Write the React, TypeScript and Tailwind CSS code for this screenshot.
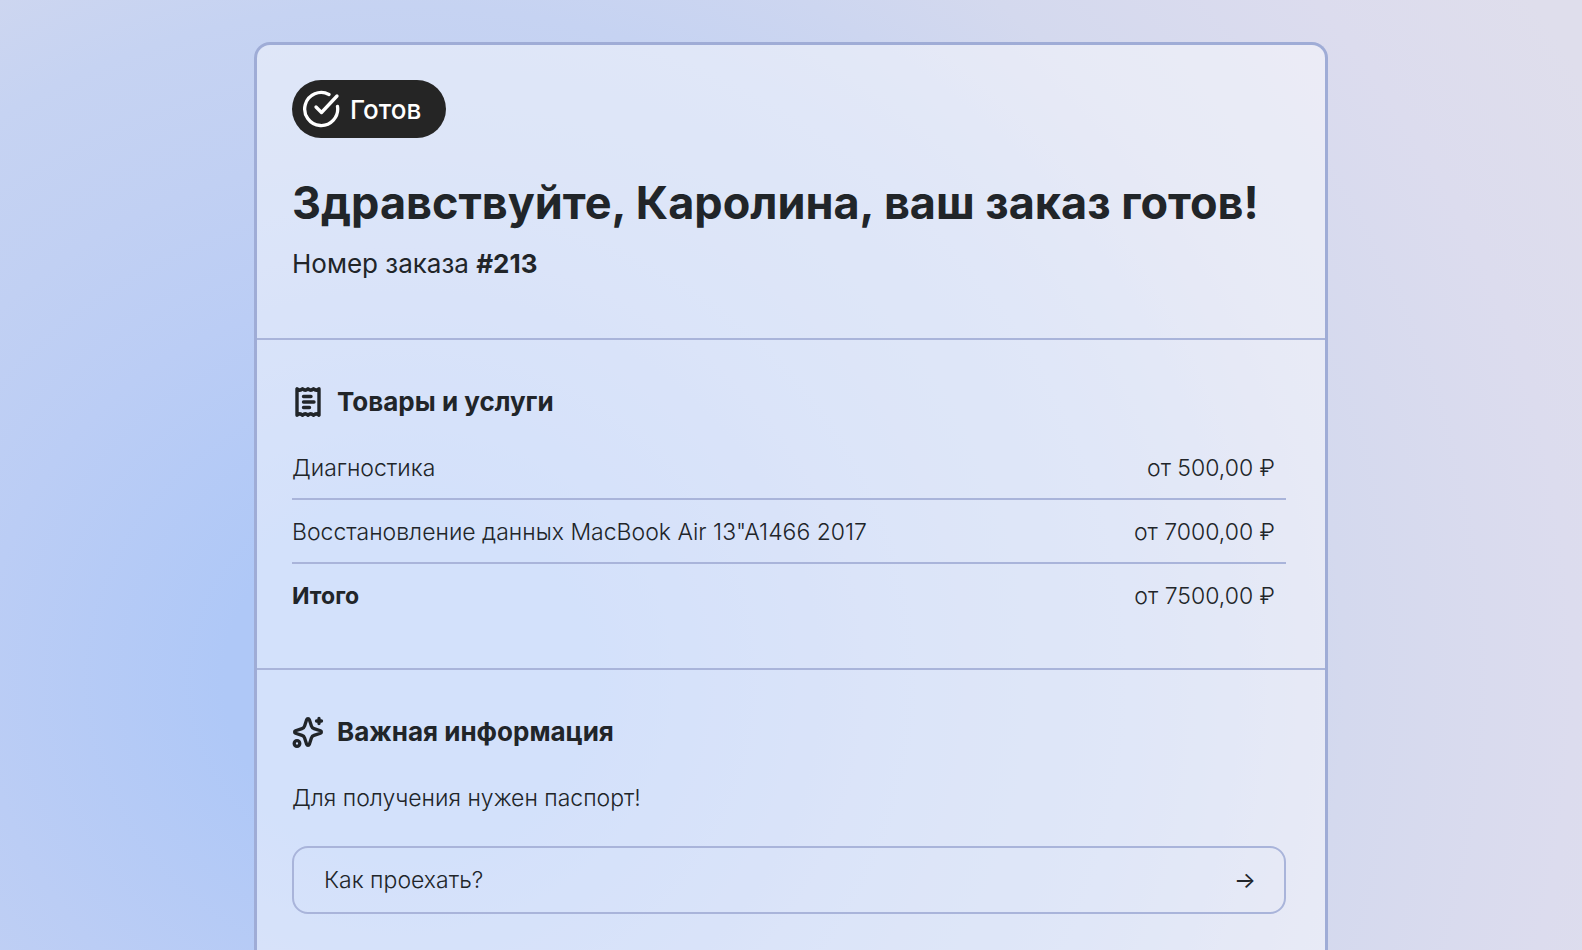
import React from 'react';

const items = [
  { name: 'Диагностика', price: 'от 500,00 ₽' },
  { name: 'Восстановление данных MacBook Air 13"A1466 2017', price: 'от 7000,00 ₽' },
];

function CheckIcon() {
  return (
    <svg className="size-10 shrink-0" viewBox="0 0 40 40" fill="none" stroke="currentColor" strokeWidth="3.3" strokeLinecap="round" strokeLinejoin="round">
      <path d="M28 5.500A16.500 16.500 0 1 0 36.500 17.500" />
      <path d="M15 18 20.500 23.500 36 7" />
    </svg>
  );
}

function ReceiptIcon() {
  return (
    <svg className="size-8 shrink-0" viewBox="0 0 32 32" fill="none" stroke="currentColor" strokeWidth="3.4" strokeLinecap="round" strokeLinejoin="round">
      <path d="M5 2.800v26.400q2.800-2.600 5.500 0 2.700-2.600 5.500 0 2.700-2.600 5.500 0 2.700-2.600 5.500 0V2.800q-2.700 2.600-5.500 0-2.700 2.600-5.500 0-2.700 2.600-5.500 0-2.700 2.600-5.500 0z" />
      <path d="M11.500 10.500h7.500M11.500 16h10.500M11.500 21.500h6" />
    </svg>
  );
}

function SparkleIcon() {
  return (
    <svg className="size-8 shrink-0" viewBox="0 0 32 32" fill="none" stroke="currentColor" strokeWidth="3.3" strokeLinecap="round" strokeLinejoin="round">
      <path d="M14.700 3.500 12.600 10a4 4 0 0 1-2.600 2.600L3.500 14.700a1.400 1.400 0 0 0 0 2.600L10 19.400a4 4 0 0 1 2.600 2.600l2.100 6.500a1.400 1.400 0 0 0 2.600 0l2.100-6.500a4 4 0 0 1 2.600-2.600l6.500-2.100a1.400 1.400 0 0 0 0-2.600L22 12.600a4 4 0 0 1-2.600-2.600l-2.100-6.500a1.400 1.400 0 0 0-2.600 0z" />
      <path d="M27 2.500v5M24.500 5h5" />
      <circle cx="5" cy="27.500" r="2.800" />
    </svg>
  );
}

export default function App() {
  return (
    <main className="min-h-screen bg-[radial-gradient(ellipse_1350px_1250px_at_400px_680px,#afc8f7_0%,#afc8f7_13%,#bbcdf5_31%,#c1d0f3_42%,#c6d3f2_54%,#d4d9ee_70%,#dcdcee_87%,#dfdeec_100%)] px-4 pt-[42px] font-[Inter,sans-serif] text-[#212529]">
      <article className="mx-auto min-h-[calc(100vh-42px)] max-w-[1074px] rounded-t-2xl border-3 border-b-0 border-[#9facd6] bg-white/45">
        <header className="border-b-2 border-[#a9b4da] pt-[35px] pr-[39px] pb-[54px] pl-[35px]">
          <div className="flex h-[58px] w-fit items-center gap-[9px] rounded-full bg-[#252525] pr-[25px] pl-[9px] text-[26px] font-medium text-white">
            <CheckIcon />
            Готов
          </div>
          <h1 className="mt-9 text-[45px] leading-[58px] font-bold">Здравствуйте, Каролина, ваш заказ готов!</h1>
          <p className="mt-3 text-[26px] leading-10">
            Номер заказа <b>#213</b>
          </p>
        </header>

        <section className="border-b-2 border-[#a9b4da] pt-11 pr-[39px] pb-[42px] pl-[35px]">
          <h2 className="flex items-center gap-[13px] text-[26px] leading-9 font-[650]">
            <ReceiptIcon />
            Товары и услуги
          </h2>
          <table className="mt-4 w-full text-[23px] leading-[60px] font-[330]">
            <tbody>
              {items.map((item) => (
                <tr key={item.name} className="border-b-2 border-[#a9b4da]">
                  <td className="pt-0.5">{item.name}</td>
                  <td className="pt-0.5 pr-[11px] text-right">{item.price}</td>
                </tr>
              ))}
              <tr>
                <th scope="row" className="pt-0.5 text-left font-bold">Итого</th>
                <td className="pt-0.5 pr-[11px] text-right">от 7500,00 ₽</td>
              </tr>
            </tbody>
          </table>
        </section>

        <section className="pt-11 pr-[39px] pb-9 pl-[35px]">
          <h2 className="flex items-center gap-[13px] text-[26px] leading-9 font-[650]">
            <SparkleIcon />
            Важная информация
          </h2>
          <p className="mt-[30px] text-[23px] leading-9 font-[330]">Для получения нужен паспорт!</p>
          <button type="button" className="mt-[30px] flex h-[68px] w-full items-center justify-between rounded-2xl border-2 border-[#a9b4da] pr-7 pl-[30px] text-[23px] font-[330]">
            Как проехать?
            <span aria-hidden="true" className="font-normal">→</span>
          </button>
        </section>
      </article>
    </main>
  );
}
